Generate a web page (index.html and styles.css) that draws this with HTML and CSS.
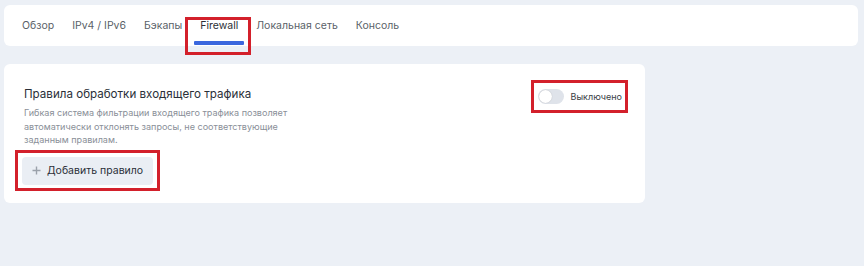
FILE: index.html
```html
<!DOCTYPE html>
<html lang="ru">
<head>
    <meta charset="utf-8">
    <meta name="viewport" content="width=device-width, initial-scale=1">
    <title>Firewall</title>

    <link rel="stylesheet" href="styles.css">
</head>
<body>
    <div class="page">
        <nav class="tabs">
            <a class="tab">Обзор</a>
            <a class="tab">IPv4 / IPv6</a>
            <a class="tab">Бэкапы</a>
            <a class="tab tab-active mark mark-tab">Firewall</a>
            <a class="tab">Локальная сеть</a>
            <a class="tab">Консоль</a>
        </nav>

        <div class="card">
            <div class="card-head">
                <div class="card-info">
                    <h2 class="card-title">Правила обработки входящего трафика</h2>
                    <p class="card-desc">Гибкая система фильтрации входящего трафика позволяет автоматически отклонять запросы, не соответствующие заданным правилам.</p>
                </div>
                <label class="switch mark mark-switch">
                    <span class="switch-track"><span class="switch-knob"></span></span>
                    <span class="switch-label">Выключено</span>
                </label>
            </div>
            <button type="button" class="btn-add mark mark-btn">
                <svg width="9" height="9" viewBox="0 0 9 9"><path d="M4.5 0.5v8M0.5 4.5h8" stroke="#9ba1aa" stroke-width="1.4" fill="none"/></svg>
                Добавить правило
            </button>
        </div>
    </div>
</body>
</html>
```

FILE: styles.css
```css
body
{
    margin: 0;
    background-color: #ecf0f6;
    font-family: Inter, "Noto Sans", sans-serif;
}
.page
{
    padding: 5px 6px 0 4px;
    display: flex;
    flex-direction: column;
    align-items: flex-start;
    gap: 18px;
}
.tabs
{
    align-self: stretch;
    height: 41px;
    background-color: #fff;
    border-radius: 6px;
    padding: 0 12px;
    display: flex;
    align-items: center;
    gap: 6px;
}
.tab
{
    position: relative;
    height: 100%;
    padding: 0 6px;
    display: flex;
    align-items: center;
    font-size: 10.5px;
    color: #5a5f68;
    cursor: pointer;
}
.tab-active
{
    color: #2b2f36;
}
.tab-active::before
{
    content: "";
    position: absolute;
    left: 0;
    right: 0;
    bottom: 1px;
    height: 4px;
    background-color: #3b67de;
    border-radius: 1px;
}

/* red annotation frames */
.mark::after
{
    content: "";
    position: absolute;
    border: 3px solid #d3202b;
    pointer-events: none;
}
.mark-tab::after
{
    top: 12px;
    bottom: -9px;
    left: -9px;
    right: -7px;
}
.mark-switch::after
{
    top: -9px;
    bottom: -9px;
    left: -7px;
    right: -6px;
}
.mark-btn::after
{
    top: -7px;
    bottom: -6px;
    left: -7px;
    right: -7px;
}

.card
{
    width: 641px;
    height: 139px;
    box-sizing: border-box;
    background-color: #fff;
    border-radius: 6px;
    padding: 20px 23px 0 18px;
}
.card-head
{
    display: flex;
    justify-content: space-between;
    align-items: flex-start;
}
.card-info
{
    padding-left: 2px;
}
.card-title
{
    margin: 0;
    font-size: 11.6px;
    font-weight: 400;
    line-height: 20px;
    color: #2a2f38;
}
.card-desc
{
    margin: 2px 0 0 0;
    max-width: 275px;
    font-size: 9.05px;
    line-height: 13.5px;
    color: #8a8f98;
}
.switch
{
    position: relative;
    margin-top: 5px;
    display: flex;
    align-items: center;
    gap: 7px;
}
.switch-track
{
    width: 26px;
    height: 15px;
    border-radius: 8px;
    background-color: #dfe3ea;
    position: relative;
}
.switch-knob
{
    position: absolute;
    left: 1px;
    top: 1px;
    width: 13px;
    height: 13px;
    border-radius: 50%;
    background-color: #fff;
    box-shadow: 0 0 1px rgba(0, 0, 0, 0.25);
}
.switch-label
{
    font-size: 9px;
    color: #3a3e45;
}
.btn-add
{
    position: relative;
    margin-top: 10px;
    height: 28px;
    border: none;
    border-radius: 4px;
    background-color: #eaeef4;
    padding: 0 10px;
    display: flex;
    align-items: center;
    gap: 6px;
    white-space: nowrap;
    font-family: Inter, "Noto Sans", sans-serif;
    font-size: 10.5px;
    color: #2a2f38;
}
```
